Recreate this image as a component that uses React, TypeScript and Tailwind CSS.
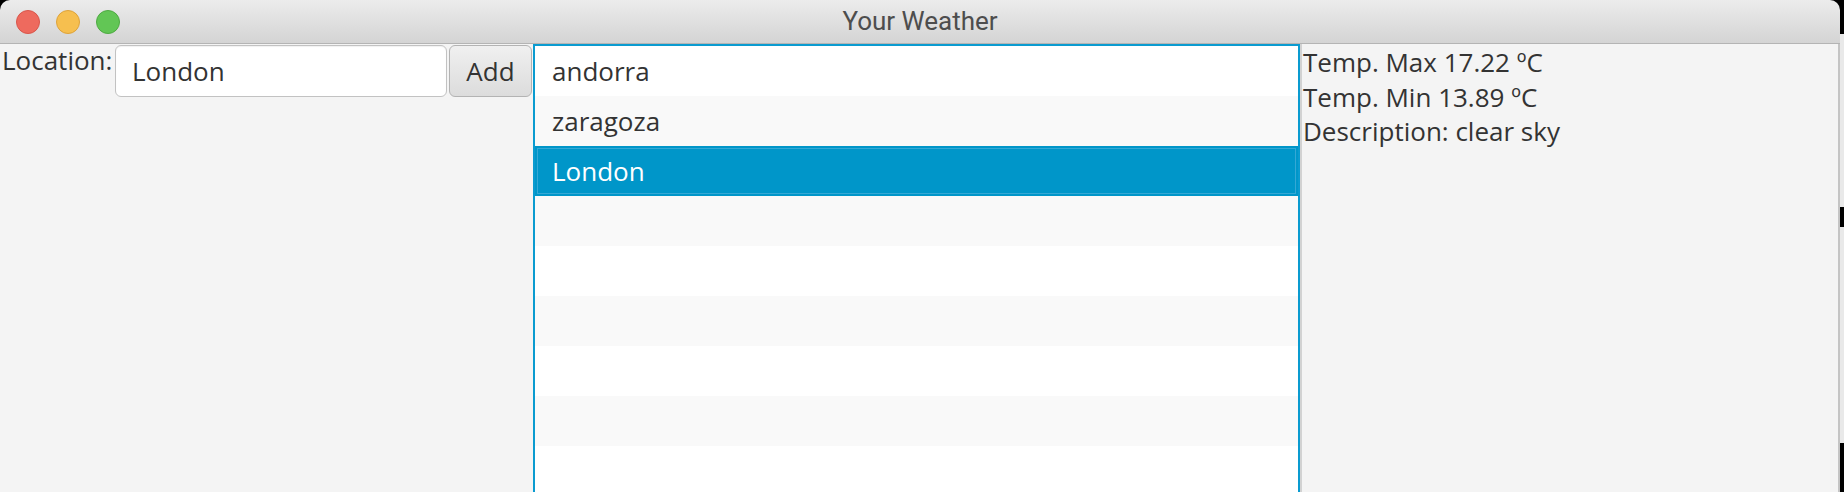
import React from 'react';

const rows = ['andorra', 'zaragoza', 'London', '', '', '', '', '', ''];
const selected = 2;

const App = () => {
  return (
    <div className="w-[1844px] h-[492px] bg-black flex overflow-hidden font-['Open_Sans',sans-serif] text-[26px] text-[#333333]">
      {/* window */}
      <div className="w-[1840px] h-full flex flex-col">
        {/* title bar */}
        <div className="h-[44px] shrink-0 rounded-t-[10px] bg-gradient-to-b from-[#ececec] to-[#d4d4d4] border-b border-[#b4b4b4] grid grid-cols-[1fr_auto_1fr] items-center">
          <div className="flex items-center gap-[16px] pl-[16px] pt-[1px]">
            <span className="w-[24px] h-[24px] rounded-full bg-[#ee6a5e] border border-[#d9564b]" />
            <span className="w-[24px] h-[24px] rounded-full bg-[#f6bf4f] border border-[#dea33a]" />
            <span className="w-[24px] h-[24px] rounded-full bg-[#62c655] border border-[#4eaa42]" />
          </div>
          <div className="font-['Roboto',sans-serif] text-[26px] text-[#4d4d4d] leading-none pb-[1px]">
            Your Weather
          </div>
          <div />
        </div>

        {/* content */}
        <div className="flex-1 flex bg-[#f4f4f4] border-r-2 border-[#c4c4c4] min-h-0">
          {/* input pane */}
          <div className="w-[533px] shrink-0 flex items-start">
            <div className="w-[113px] pl-[2px] leading-[32px] whitespace-nowrap">Location:</div>
            <div className="ml-[2px] mt-[1px] w-[332px] h-[52px] bg-white border border-[#c2c2c2] rounded-[6px] shadow-[inset_0_1px_1px_rgba(0,0,0,0.06)] flex items-center pl-[16px]">
              London
            </div>
            <button className="ml-[2px] mt-[1px] w-[83px] h-[52px] rounded-[6px] border border-[#b3b3b3] bg-gradient-to-b from-[#f0f0f0] to-[#dcdcdc] flex items-center justify-center text-[#333333]">
              Add
            </button>
          </div>

          {/* list */}
          <div className="w-[767px] shrink-0 border-2 border-b-0 border-[#0a9bd0] bg-white flex flex-col overflow-hidden">
            {rows.map((r, i) =>
              i === selected ? (
                <div key={i} className="h-[50px] shrink-0 bg-[#0096c9] p-[2px]">
                  <div className="h-full border border-[#35a8d5] flex items-center pl-[14px] text-white">
                    {r}
                  </div>
                </div>
              ) : (
                <div
                  key={i}
                  className={`h-[50px] shrink-0 flex items-center pl-[17px] ${i % 2 === 1 ? 'bg-[#f9f9f9]' : 'bg-white'}`}
                >
                  {r}
                </div>
              )
            )}
          </div>

          {/* weather details */}
          <div className="flex-1 border-l-2 border-[#d2d2d2] pl-[1px] pt-[1px] leading-[34.5px] whitespace-nowrap">
            <div>Temp. Max 17.22 ºC</div>
            <div>Temp. Min 13.89 ºC</div>
            <div>Description: clear sky</div>
          </div>
        </div>
      </div>

      {/* screen edge beyond the window */}
      <div className="w-[4px] h-full flex flex-col">
        <div className="h-[34px] bg-black" />
        <div className="h-[173px] bg-[#e9e9e9]" />
        <div className="h-[20px] bg-black" />
        <div className="h-[216px] bg-[#e9e9e9]" />
        <div className="flex-1 bg-black" />
      </div>
    </div>
  );
};

export default App;
